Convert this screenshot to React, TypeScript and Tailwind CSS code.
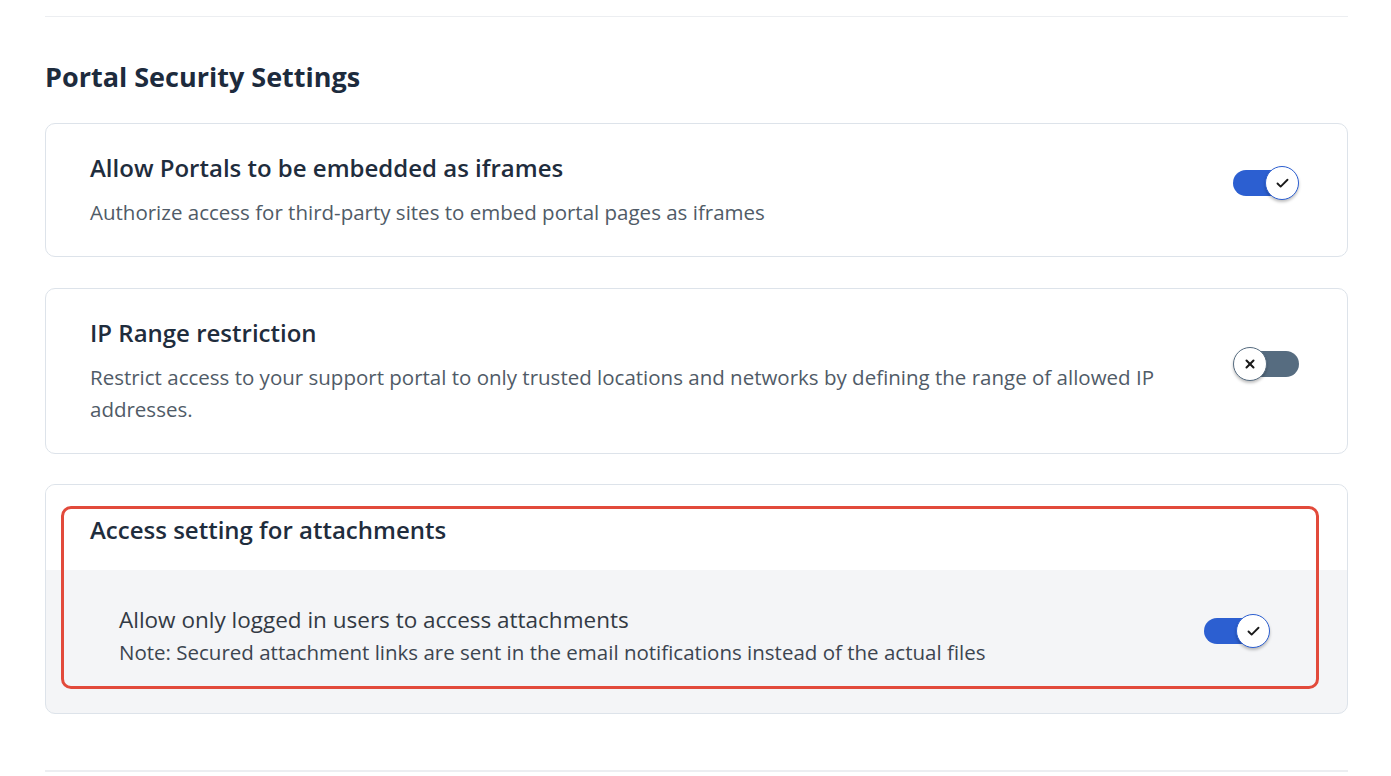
import { Check, X } from 'lucide-react';

function Toggle({ on }: { on: boolean }) {
  return (
    <div className="relative w-[66px] h-[34px] shrink-0">
      <div
        className={
          on
            ? 'absolute left-0 right-[8px] top-[4px] h-[26px] rounded-full bg-[#2c5fd1]'
            : 'absolute left-[8px] right-0 top-[4px] h-[26px] rounded-full bg-[#566c80]'
        }
      />
      <div
        className={
          on
            ? 'absolute right-0 top-0 w-[34px] h-[34px] rounded-full bg-white border-[1.5px] border-[#2c5fd1] shadow-[0_2px_3px_rgba(0,0,0,0.25)] flex items-center justify-center'
            : 'absolute left-0 top-0 w-[34px] h-[34px] rounded-full bg-white border-[1.5px] border-[#566c80] shadow-[0_2px_3px_rgba(0,0,0,0.25)] flex items-center justify-center'
        }
      >
        {on ? (
          <Check size={15} strokeWidth={3} className="text-[#1a1a1a]" />
        ) : (
          <X size={14} strokeWidth={3.5} className="text-[#1a1a1a]" />
        )}
      </div>
    </div>
  );
}

function SettingCard({
  title,
  description,
  on,
}: {
  title: string;
  description: string;
  on: boolean;
}) {
  return (
    <div className="flex items-center justify-between border border-[#dde3ea] rounded-[10px] bg-white pl-[44px] pr-[48px] pt-[28px] pb-[28px]">
      <div className="max-w-[1100px]">
        <div className="text-[24px] leading-[32px] font-semibold text-[#1f2d3d]">{title}</div>
        <div className="mt-[12px] text-[20.5px] leading-[32px] text-[#505b67]">{description}</div>
      </div>
      <div className="mb-[14px]">
        <Toggle on={on} />
      </div>
    </div>
  );
}

export default function App() {
  return (
    <div className="min-h-screen bg-white font-['Open_Sans','Noto_Sans',sans-serif] pl-[45px] pr-[43px]">
      <div className="h-[17px] border-b border-[#eceef1]" />
      <h2 className="mt-[43px] text-[27px] leading-[34px] font-bold text-[#1d2b3d]">
        Portal Security Settings
      </h2>
      <div className="mt-[29px] flex flex-col gap-[31px]">
        <SettingCard
          title="Allow Portals to be embedded as iframes"
          description="Authorize access for third-party sites to embed portal pages as iframes"
          on
        />
        <SettingCard
          title="IP Range restriction"
          description="Restrict access to your support portal to only trusted locations and networks by defining the range of allowed IP addresses."
          on={false}
        />
        <div className="relative -mt-[1px] border border-[#dde3ea] rounded-[10px] bg-[#f4f5f7] overflow-hidden">
          <div className="bg-white h-[85px] pl-[44px] pt-[29px]">
            <div className="text-[24px] leading-[32px] font-semibold text-[#1f2d3d]">
              Access setting for attachments
            </div>
          </div>
          <div className="flex items-center justify-between pl-[73px] pr-[77px] pt-[34px] pb-[45px]">
            <div>
              <div className="text-[22.5px] leading-[32px] text-[#333a44]">
                Allow only logged in users to access attachments
              </div>
              <div className="text-[20.5px] leading-[32px] text-[#3c4550]">
                Note: Secured attachment links are sent in the email notifications instead of the actual files
              </div>
            </div>
            <div className="mb-[10px]">
              <Toggle on />
            </div>
          </div>
          <div className="absolute left-[15px] top-[21px] right-[28px] bottom-[24px] border-[3px] border-[#e24a3b] rounded-[10px] pointer-events-none" />
        </div>
      </div>
      <div className="mt-[56px] border-b-2 border-[#eceef1]" />
    </div>
  );
}
